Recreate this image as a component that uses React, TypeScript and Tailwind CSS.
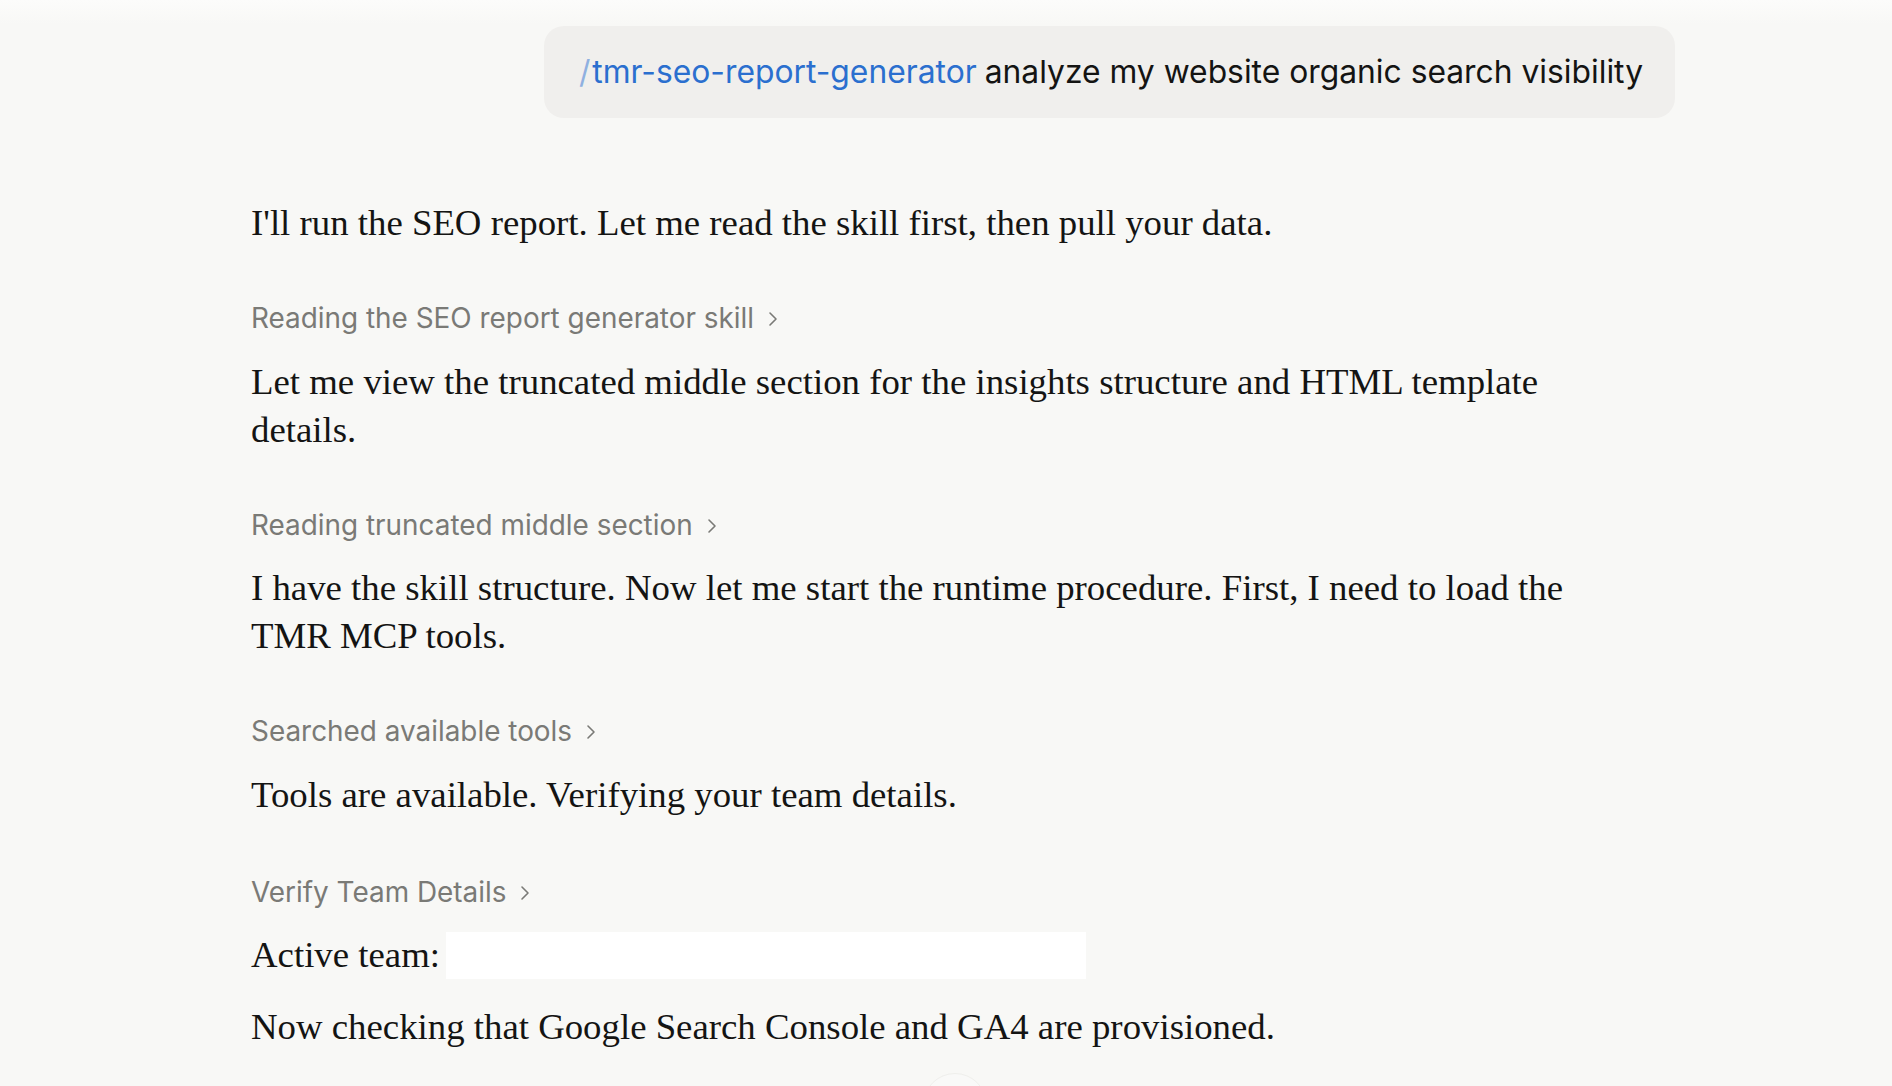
import React from "react";

const serif = { fontFamily: '"Liberation Serif", "Times New Roman", serif' };
const sans = { fontFamily: 'Inter, "Noto Sans", sans-serif' };

function Chevron() {
  return (
    <svg width="24" height="24" viewBox="0 0 24 24" fill="none" stroke="currentColor" strokeWidth="1.6" strokeLinecap="round" strokeLinejoin="round" className="shrink-0">
      <path d="m9 18 6-6-6-6" />
    </svg>
  );
}

function Label({ children }: { children: React.ReactNode }) {
  return (
    <div className="flex h-[36px] items-center gap-[7px] text-[27.9px] text-[#7a7a76]" style={sans}>
      <span>{children}</span>
      <Chevron />
    </div>
  );
}

function Para({ children, className = "" }: { children: React.ReactNode; className?: string }) {
  return (
    <div className={"text-[36.8px] leading-[48px] text-[#141413] " + className} style={serif}>
      {children}
    </div>
  );
}

export default function App() {
  return (
    <div className="relative min-h-screen w-full overflow-hidden bg-[#f8f8f6]">
      <div className="absolute inset-x-0 top-0 h-[24px] bg-gradient-to-b from-[#fcfcfb] to-[#f8f8f6]" />
      <div className="relative flex flex-col pl-[251px] pr-[217px] pt-[26px]">
        <div className="flex justify-end">
          <div className="flex h-[92px] items-center rounded-[20px] bg-[#f0efed] pl-[35px] pr-[32px] text-[31.8px] text-[#141413]" style={sans}>
            <span className="mr-[2px] text-[#8fb0e0]">/</span>
            <span className="text-[#2b6fcf]">tmr-seo-report-generator</span>
            <span className="ml-[8px]">analyze my website organic search visibility</span>
          </div>
        </div>

        <Para className="mt-[81px]">I'll run the SEO report. Let me read the skill first, then pull your data.</Para>

        <div className="mt-[54px]">
          <Label>Reading the SEO report generator skill</Label>
        </div>
        <Para className="mt-[21px]">
          Let me view the truncated middle section for the insights structure and HTML template
          <br />
          details.
        </Para>

        <div className="mt-[54px]">
          <Label>Reading truncated middle section</Label>
        </div>
        <Para className="mt-[20px]">
          I have the skill structure. Now let me start the runtime procedure. First, I need to load the
          <br />
          TMR MCP tools.
        </Para>

        <div className="mt-[54px]">
          <Label>Searched available tools</Label>
        </div>
        <Para className="mt-[21px]">Tools are available. Verifying your team details.</Para>

        <div className="mt-[56px]">
          <Label>Verify Team Details</Label>
        </div>
        <Para className="mt-[20px] flex items-center">
          <span>Active team:</span>
          <span className="ml-[6px] inline-block h-[47px] w-[640px] bg-white" />
        </Para>
        <Para className="mt-[24px]">Now checking that Google Search Console and GA4 are provisioned.</Para>
      </div>
      <div className="absolute left-[923px] top-[1073px] h-[64px] w-[64px] rounded-full border border-[#efefec] bg-[#f9f9f8]" />
    </div>
  );
}
